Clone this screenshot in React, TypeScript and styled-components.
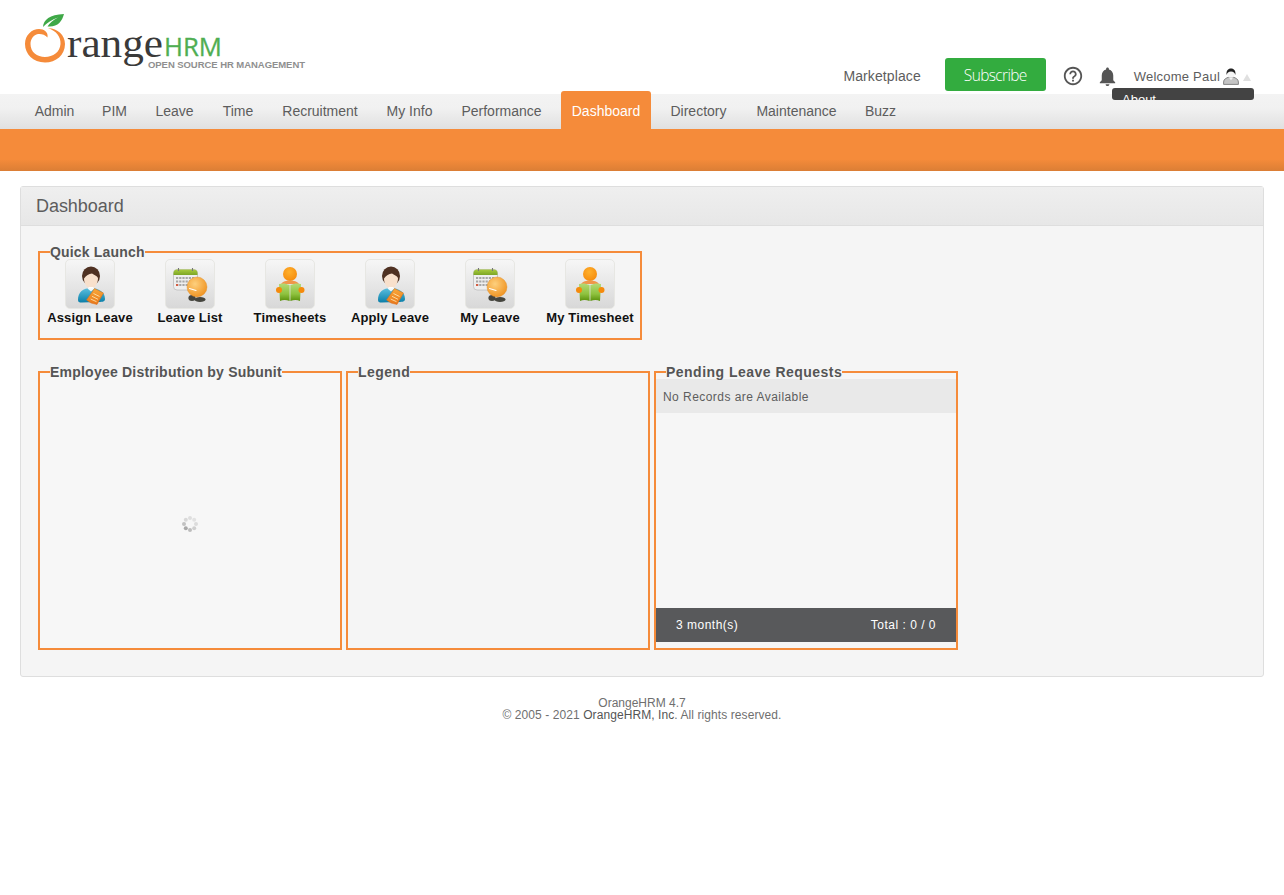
import React from "react";
import styled, { createGlobalStyle } from "styled-components";
import { MdHelpOutline, MdNotifications } from "react-icons/md";

const Global = createGlobalStyle`
  html, body { margin: 0; padding: 0; background: #fff; }
  body { font-family: "Liberation Sans", Arial, sans-serif; color: #5d5d5d; }
  * { box-sizing: border-box; }
`;

const Page = styled.div`
  width: 1284px;
  min-height: 895px;
  background: #fff;
`;

const Header = styled.header`
  position: relative;
  height: 94px;
  display: flex;
  justify-content: space-between;
  align-items: flex-end;
  padding: 0 33px 3px 20px;
`;

const LogoSvg = styled.svg`
  display: block;
  width: 290px;
  height: 65px;
  margin-bottom: 16px;
`;

const Account = styled.div`
  display: flex;
  align-items: center;
  height: 33px;
`;

const MarketLink = styled.a`
  font-size: 14px;
  letter-spacing: 0.1px;
  color: #5d5d5d;
  margin: 2px 24px 0 0;
`;

const SubscribeButton = styled.button`
  width: 101px;
  height: 33px;
  border: 0;
  border-radius: 3px;
  background: #33ac3f;
  color: #fff;
  font-family: "Open Sans", sans-serif;
  font-weight: 300;
  font-size: 15.5px;
  letter-spacing: -0.65px;
  padding: 0;
  margin-right: 16px;
`;

const IconSlot = styled.span<{ $gap: number }>`
  display: flex;
  color: #555;
  margin-right: ${(p) => p.$gap}px;
  margin-top: 3px;
`;

const Welcome = styled.span`
  font-size: 13px;
  letter-spacing: 0.22px;
  color: #5d5d5d;
  margin-right: 3px;
  margin-top: 3px;
`;

const Caret = styled.span`
  width: 0;
  height: 0;
  border-left: 4px solid transparent;
  border-right: 4px solid transparent;
  border-bottom: 7px solid #e0e0e0;
  margin-left: 4px;
  margin-top: 6px;
`;

const AboutMenu = styled.div`
  position: absolute;
  left: 1112px;
  top: 88px;
  width: 142px;
  height: 12px;
  overflow: hidden;
  background: #434343;
  border-radius: 3px;
  color: #fff;
  font-size: 13px;
  line-height: 16px;
  padding: 4px 0 0 10px;
  z-index: 2;
`;

const MenuBar = styled.nav`
  height: 35px;
  background: linear-gradient(#f3f3f3 0%, #f1f1f1 40%, #e0e0e0 100%);
  display: flex;
  padding-left: 25px;
  gap: 9px;
`;

const MenuItem = styled.a<{ $active?: boolean; $width: number }>`
  width: ${(p) => p.$width}px;
  text-align: center;
  white-space: nowrap;
  font-size: 14px;
  line-height: 34px;
  height: ${(p) => (p.$active ? "38px" : "35px")};
  margin-top: ${(p) => (p.$active ? "-3px" : "0")};
  padding-top: ${(p) => (p.$active ? "3px" : "0")};
  color: ${(p) => (p.$active ? "#fff" : "#5d5d5d")};
  background: ${(p) => (p.$active ? "#f58b3a" : "transparent")};
  border-radius: ${(p) => (p.$active ? "3px 3px 0 0" : "0")};
`;

const OrangeBar = styled.div`
  height: 42px;
  background: linear-gradient(#f58b3a 0%, #f58b3a 72%, #db7e35 100%);
`;

const Panel = styled.section`
  margin: 15px 20px 0;
  border: 1px solid #dedede;
  border-radius: 3px;
  background: #f5f5f5;
`;

const PanelHead = styled.h1`
  margin: 0;
  height: 39px;
  padding-left: 15px;
  font-size: 18px;
  font-weight: 400;
  letter-spacing: -0.05px;
  line-height: 38px;
  color: #5d5d5d;
  background: linear-gradient(#efefef, #e7e7e7);
  border-bottom: 1px solid #dedede;
`;

const PanelBody = styled.div`
  padding: 18px 17px 26px;
`;

const Box = styled.fieldset<{ $w: number; $h: number; $light?: boolean }>`
  margin: 0;
  padding: 0;
  min-width: 0;
  width: ${(p) => p.$w}px;
  height: ${(p) => p.$h}px;
  border: 2px solid #f58b3a;
  background: ${(p) => (p.$light ? "#f7f7f7" : "transparent")};
`;

const BoxLegend = styled.legend<{ $spacing: number }>`
  position: relative;
  z-index: 1;
  margin-left: 10px;
  padding: 0;
  font-size: 14px;
  line-height: 16px;
  font-weight: 700;
  letter-spacing: ${(p) => p.$spacing}px;
  color: #555;
`;

const LaunchRow = styled.div`
  display: flex;
  margin-top: -1px;
`;

const LaunchItem = styled.a`
  width: 100px;
  display: flex;
  flex-direction: column;
  align-items: center;
`;

const Tile = styled.span`
  width: 50px;
  height: 50px;
  border: 1px solid #e7e7e3;
  border-radius: 5px;
  background: linear-gradient(#f6f6f6, #d8d8d8);
  display: block;
`;

const TileSvg = styled.svg`
  display: block;
  width: 48px;
  height: 48px;
`;

const LaunchLabel = styled.span`
  margin-top: 1px;
  font-size: 13px;
  line-height: 16px;
  font-weight: 700;
  letter-spacing: 0.15px;
  white-space: nowrap;
  color: #111;
`;

const ChartRow = styled.div`
  display: flex;
  gap: 4px;
  margin-top: 24px;
`;

const LoaderWrap = styled.div`
  height: 269px;
  display: flex;
  align-items: center;
  justify-content: center;
  padding-top: 19px;
`;

const PendingBody = styled.div`
  height: 263px;
  margin-top: -1px;
  display: flex;
  flex-direction: column;
  justify-content: space-between;
  background: #f6f6f6;
`;

const NoRecords = styled.div`
  height: 34px;
  background: #e9e9e9;
  padding-left: 7px;
  font-size: 12px;
  letter-spacing: 0.45px;
  line-height: 36px;
  color: #5d5d5d;
`;

const PendingFoot = styled.div`
  height: 34px;
  background: #58595b;
  color: #fff;
  display: flex;
  justify-content: space-between;
  align-items: center;
  padding: 0 20px;
  font-size: 12px;
  letter-spacing: 0.5px;
`;

const Footer = styled.footer`
  margin-top: 20px;
  text-align: center;
  font-size: 12px;
  line-height: 12px;
  color: #6f6f6f;
`;

const Copyright = styled.div`
  letter-spacing: 0.08px;
`;

const FooterLink = styled.a`
  color: #555;
`;

const Logo = () => (
  <LogoSvg viewBox="20 10 290 65" aria-label="OrangeHRM">
    <path
      fill="#f58b3a"
      d="M48 28.3C57 28 65 35 65 44C65 55 56 62.5 45 62.5C33 62.5 25 54 25 44C25 35 32 29 39 29C44 29 48.5 32 47.5 37.5C45 34.5 41 33.5 38 34C33.5 35 30.5 39 30.5 44C30.5 52 37 57 45 57C53 57 60 52 60.5 44C61 37 56 30.5 48 28.3Z"
    />
    <path fill="#3fa847" d="M43 27C43.5 20 49.5 14.5 64 14C62 21.5 57.5 27.5 47.5 26.5C49.5 23 53 20 58 17.5C52 19.5 47 23 43 27Z" />
    <text x="67" y="57" fontFamily="'Liberation Serif', serif" fontSize="41" fill="#3a3a3a" textLength="96" lengthAdjust="spacingAndGlyphs">
      range
    </text>
    <text x="164" y="56" fontFamily="'Open Sans', sans-serif" fontSize="26" fill="#4fae52" stroke="#4fae52" strokeWidth="0.3" textLength="58" lengthAdjust="spacingAndGlyphs">
      HRM
    </text>
    <text x="148" y="68" fontFamily="'Liberation Sans', sans-serif" fontSize="9.5" fontWeight="700" fill="#8f8f8f" textLength="157" lengthAdjust="spacing">
      OPEN SOURCE HR MANAGEMENT
    </text>
  </LogoSvg>
);

const PersonIcon = () => (
  <TileSvg viewBox="0 0 48 48">
    <defs>
      <linearGradient id="pblue" x1="0" x2="0" y1="0" y2="1">
        <stop offset="0" stopColor="#5cc0df" />
        <stop offset="1" stopColor="#0a7ea8" />
      </linearGradient>
      <linearGradient id="pdoc" x1="0" x2="0" y1="0" y2="1">
        <stop offset="0" stopColor="#f9a93a" />
        <stop offset="1" stopColor="#e8761a" />
      </linearGradient>
    </defs>
    <path fill="url(#pblue)" d="M12 40C12 32 17 28 25 28C33 28 39 32 39 39C39 42 36 42 30 42L16 42.5C13 42.5 12 42 12 40Z" />
    <ellipse cx="25" cy="16" rx="9" ry="9.5" fill="#4f3122" />
    <path fill="#f8e0cc" d="M18 18.5C20 15.5 23 14 26 13.5C28 15 31 15.5 32 18C32 23.5 28.8 28.5 25 28.5C21.2 28.5 18 24 18 18.5Z" />
    <path fill="#fff" opacity="0.9" d="M21.5 28.5L25 31.5L28.5 28.5L27 27H23Z" />
    <path fill="url(#pdoc)" stroke="#d96c16" strokeWidth="0.5" d="M20.5 40L28.5 28.5L37.5 33L31 44.5L25 43Z" />
    <path stroke="#fde2a8" strokeWidth="0.9" d="M27.5 33.5L33.5 36.5M26 36.3L32 39.3M24.7 39L30.5 41.7" />
  </TileSvg>
);

const CalendarIcon = () => (
  <TileSvg viewBox="0 0 48 48">
    <defs>
      <radialGradient id="cball" cx="0.4" cy="0.35" r="0.7">
        <stop offset="0" stopColor="#fdd07e" />
        <stop offset="1" stopColor="#f0921f" />
      </radialGradient>
      <linearGradient id="cgreen" x1="0" x2="0" y1="0" y2="1">
        <stop offset="0" stopColor="#a8cb3e" />
        <stop offset="1" stopColor="#7ca625" />
      </linearGradient>
    </defs>
    <rect x="7.5" y="9.5" width="24" height="20.5" rx="3.5" fill="#efefef" stroke="#bdbdbd" strokeWidth="0.8" />
    <path fill="url(#cgreen)" d="M7.5 15V13C7.5 11 9 9.5 11 9.5H28C30 9.5 31.5 11 31.5 13V15Z" />
    <path stroke="#777" strokeWidth="1.1" d="M12.5 8V11M26.5 8V11" />
    <path stroke="#a6a6a6" strokeWidth="1.8" strokeDasharray="2.2 1" d="M10 18H29M10 21.5H29M10 25H29" />
    <rect x="10" y="24.1" width="2.2" height="1.8" fill="#d9573a" />
    <ellipse cx="26" cy="38" rx="3.6" ry="3" fill="#45453e" />
    <ellipse cx="34" cy="39.5" rx="5.5" ry="2.6" fill="#45453e" />
    <circle cx="31" cy="27" r="10" fill="url(#cball)" stroke="#e08a20" strokeWidth="0.4" />
    <path stroke="#fff" strokeWidth="1.1" strokeLinecap="round" d="M23.5 28.5L30 30.5" />
  </TileSvg>
);

const ReaderIcon = () => (
  <TileSvg viewBox="0 0 48 48">
    <defs>
      <radialGradient id="rball" cx="0.45" cy="0.35" r="0.7">
        <stop offset="0" stopColor="#ffb02c" />
        <stop offset="1" stopColor="#f58a0c" />
      </radialGradient>
      <linearGradient id="rbook" x1="0" x2="0" y1="0" y2="1">
        <stop offset="0" stopColor="#b4da76" />
        <stop offset="0.6" stopColor="#8ec23e" />
        <stop offset="1" stopColor="#5a900c" />
      </linearGradient>
    </defs>
    <circle cx="24" cy="14" r="7" fill="url(#rball)" />
    <path fill="#f0964a" d="M15 24C17 21 20 20.5 24 20.5C28 20.5 31 21 33 24Z" />
    <path fill="url(#rbook)" d="M13 24C17 23 20 23.5 23.6 25V41C20 39.5 17 39.5 14 41Z" />
    <path fill="url(#rbook)" d="M24.4 25C28 23.5 31 23 35 24L34 41C31 39.5 28 39.5 24.4 41Z" />
    <circle cx="13" cy="30" r="3" fill="#f58a0c" />
    <circle cx="35.5" cy="30" r="3" fill="#f58a0c" />
  </TileSvg>
);

const AvatarIcon = () => (
  <svg width="16" height="17" viewBox="0 0 16 17" aria-hidden="true">
    <path fill="#c4c4c4" stroke="#6e6e6e" strokeWidth="0.8" d="M0.6 16.4V14C0.6 11 3.5 10 5.5 9.2H10.5C12.5 10 15.4 11 15.4 14V16.4Z" />
    <path fill="#f2f2f2" d="M5.8 9.5L8 12.2L10.2 9.5Z" />
    <circle cx="8" cy="5.4" r="4.2" fill="#f5f5f5" />
    <path fill="#222" d="M3.6 7C3 3 5 .6 8 .6C11 .6 13 3 12.4 7C11.8 5 10.6 3.6 8 3.6C5.4 3.6 4.2 5 3.6 7Z" />
  </svg>
);

const Spinner = () => (
  <svg width="16" height="16" viewBox="0 0 16 16" aria-label="Loading">
    {[
      [8, 2, "#dedede"],
      [12.2, 3.8, "#e2e2e2"],
      [14, 8, "#dcdcdc"],
      [12.2, 12.2, "#cfcfcf"],
      [8, 14, "#bdbdbd"],
      [3.8, 12.2, "#a9a9a9"],
      [2, 8, "#c2c2c2"],
      [3.8, 3.8, "#d8d8d8"],
    ].map(([x, y, c]) => (
      <circle key={`${x}-${y}`} cx={x as number} cy={y as number} r="2" fill={c as string} />
    ))}
  </svg>
);

const menu: [string, number][] = [
  ["Admin", 59],
  ["PIM", 43],
  ["Leave", 59],
  ["Time", 50],
  ["Recruitment", 96],
  ["My Info", 65],
  ["Performance", 101],
  ["Dashboard", 90],
  ["Directory", 77],
  ["Maintenance", 101],
  ["Buzz", 49],
];

const launch = [
  { label: "Assign Leave", Icon: PersonIcon },
  { label: "Leave List", Icon: CalendarIcon },
  { label: "Timesheets", Icon: ReaderIcon },
  { label: "Apply Leave", Icon: PersonIcon },
  { label: "My Leave", Icon: CalendarIcon },
  { label: "My Timesheet", Icon: ReaderIcon },
];

export default function App() {
  return (
    <Page>
      <Global />
      <Header>
        <Logo />
        <Account>
          <MarketLink>Marketplace</MarketLink>
          <SubscribeButton>Subscribe</SubscribeButton>
          <IconSlot $gap={12}>
            <MdHelpOutline size={22} />
          </IconSlot>
          <IconSlot $gap={15}>
            <MdNotifications size={23} />
          </IconSlot>
          <Welcome>Welcome Paul</Welcome>
          <IconSlot $gap={0}>
            <AvatarIcon />
          </IconSlot>
          <Caret />
        </Account>
        <AboutMenu>About</AboutMenu>
      </Header>
      <MenuBar>
        {menu.map(([m, w]) => (
          <MenuItem key={m} $width={w} $active={m === "Dashboard"}>
            {m}
          </MenuItem>
        ))}
      </MenuBar>
      <OrangeBar />
      <Panel>
        <PanelHead>Dashboard</PanelHead>
        <PanelBody>
          <Box $w={604} $h={96}>
            <BoxLegend $spacing={0.17}>Quick Launch</BoxLegend>
            <LaunchRow>
              {launch.map(({ label, Icon }) => (
                <LaunchItem key={label}>
                  <Tile>
                    <Icon />
                  </Tile>
                  <LaunchLabel>{label}</LaunchLabel>
                </LaunchItem>
              ))}
            </LaunchRow>
          </Box>
          <ChartRow>
            <Box $w={304} $h={286} $light>
              <BoxLegend $spacing={0.22}>Employee Distribution by Subunit</BoxLegend>
              <LoaderWrap>
                <Spinner />
              </LoaderWrap>
            </Box>
            <Box $w={304} $h={286}>
              <BoxLegend $spacing={0.42}>Legend</BoxLegend>
            </Box>
            <Box $w={304} $h={286}>
              <BoxLegend $spacing={0.48}>Pending Leave Requests</BoxLegend>
              <PendingBody>
                <NoRecords>No Records are Available</NoRecords>
                <PendingFoot>
                  <span>3 month(s)</span>
                  <span>Total : 0 / 0</span>
                </PendingFoot>
              </PendingBody>
            </Box>
          </ChartRow>
        </PanelBody>
      </Panel>
      <Footer>
        <div>OrangeHRM 4.7</div>
        <Copyright>
          © 2005 - 2021 <FooterLink>OrangeHRM, Inc</FooterLink>. All rights reserved.
        </Copyright>
      </Footer>
    </Page>
  );
}
